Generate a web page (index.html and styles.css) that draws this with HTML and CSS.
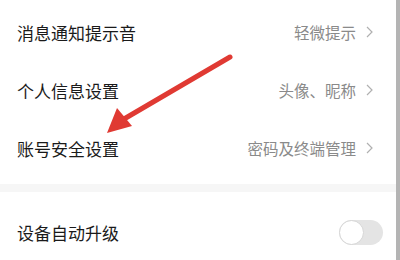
FILE: index.html
```html
<!DOCTYPE html>
<html lang="zh">
<head>
<meta charset="utf-8">
<link rel="stylesheet" href="styles.css">
</head>
<body>
<div class="screen">
  <div class="main">
    <div class="list">
      <div class="row">
        <span class="label">消息通知提示音</span>
        <span class="value">轻微提示<svg class="chev" viewBox="0 0 7 12" width="7" height="12"><path d="M1 1 L6 6 L1 11" fill="none" stroke="#b0b0b0" stroke-width="1.2"/></svg></span>
      </div>
      <div class="row">
        <span class="label">个人信息设置</span>
        <span class="value">头像、昵称<svg class="chev" viewBox="0 0 7 12" width="7" height="12"><path d="M1 1 L6 6 L1 11" fill="none" stroke="#b0b0b0" stroke-width="1.2"/></svg></span>
      </div>
      <div class="row">
        <span class="label">账号安全设置</span>
        <span class="value">密码及终端管理<svg class="chev" viewBox="0 0 7 12" width="7" height="12"><path d="M1 1 L6 6 L1 11" fill="none" stroke="#b0b0b0" stroke-width="1.2"/></svg></span>
      </div>
    </div>
    <div class="sep"></div>
    <div class="row row-toggle">
      <span class="label">设备自动升级</span>
      <span class="toggle"><span class="knob"></span></span>
    </div>
    <svg class="arrow" viewBox="0 0 400 260" width="400" height="260">
      <line x1="230" y1="57" x2="124" y2="119" stroke="#e03a33" stroke-width="5" stroke-linecap="round"/>
      <polygon points="107,133 117,108 132,126" fill="#e03a33"/>
    </svg>
  </div>
  <div class="strip"></div>
</div>
</body>
</html>
```

FILE: styles.css
```css
html, body {
  margin: 0;
  padding: 0;
  background: #ffffff;
}
body {
  font-family: "Noto Sans CJK SC", "Noto Sans", sans-serif;
}
.screen {
  width: 400px;
  height: 260px;
  display: flex;
  overflow: hidden;
}
.main {
  position: relative;
  flex: 1;
  padding-top: 3px;
}
.strip {
  width: 4px;
  background: #b4b4b4;
}
.row {
  height: 58px;
  display: flex;
  align-items: center;
  justify-content: space-between;
  padding: 0 23px 0 17px;
}
.label {
  font-size: 17px;
  color: #1a1a1a;
}
.value {
  display: flex;
  align-items: center;
  gap: 10px;
  font-size: 15.5px;
  color: #8a8a8a;
}
.chev {
  display: block;
}
.sep {
  height: 8px;
  margin-top: 7px;
  margin-bottom: 11px;
  background: #f6f6f6;
}
.row-toggle {
  padding-right: 13px;
}
.toggle {
  width: 44px;
  height: 25px;
  border-radius: 13px;
  background: #e4e4e4;
  position: relative;
}
.knob {
  position: absolute;
  left: 0;
  top: 0;
  width: 23px;
  height: 23px;
  border-radius: 50%;
  background: #ffffff;
  border: 1px solid #d6d6d6;
}
.arrow {
  position: absolute;
  left: 0;
  top: 0;
  pointer-events: none;
}
```
